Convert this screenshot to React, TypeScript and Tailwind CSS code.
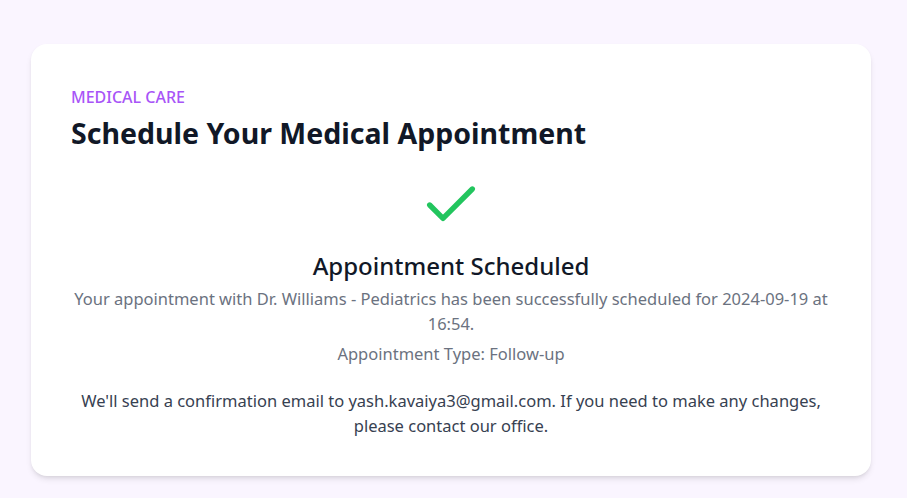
import React from "react";
import { Check } from "lucide-react";

const App = () => {
  return (
    <div
      className="min-h-screen bg-[#faf5ff] pl-[31px] pr-[36px] pt-[44px] pb-[22px]"
      style={{ fontFamily: '"Noto Sans", "Open Sans", sans-serif' }}
    >
      <div className="bg-white rounded-2xl shadow-md p-10 pt-[41px] pb-[38px]">
        <p className="text-base text-[#a855f7] font-medium uppercase leading-6">Medical Care</p>
        <h1 className="mt-1.5 text-[28.5px] leading-9 font-bold text-[#111827]">
          Schedule Your Medical Appointment
        </h1>

        <div className="mt-[22px] flex flex-col items-center text-center">
          <Check size={64} strokeWidth={2} className="text-[#22c55e]" />
          <h2 className="mt-[13px] text-2xl leading-8 font-medium text-[#111827]">
            Appointment Scheduled
          </h2>
          <p className="mt-1 text-[16.5px] leading-[25px] text-[#6b7280]">
            Your appointment with Dr. Williams - Pediatrics has been successfully scheduled for 2024-09-19 at 16:54.
          </p>
          <p className="mt-[6px] text-[16.5px] leading-6 text-[#6b7280]">Appointment Type: Follow-up</p>
          <p className="mt-[22px] text-[16.5px] leading-[25px] text-[#374151]">
            We'll send a confirmation email to yash.kavaiya3@gmail.com. If you need to make any changes, please contact our office.
          </p>
        </div>
      </div>
    </div>
  );
};

export default App;
